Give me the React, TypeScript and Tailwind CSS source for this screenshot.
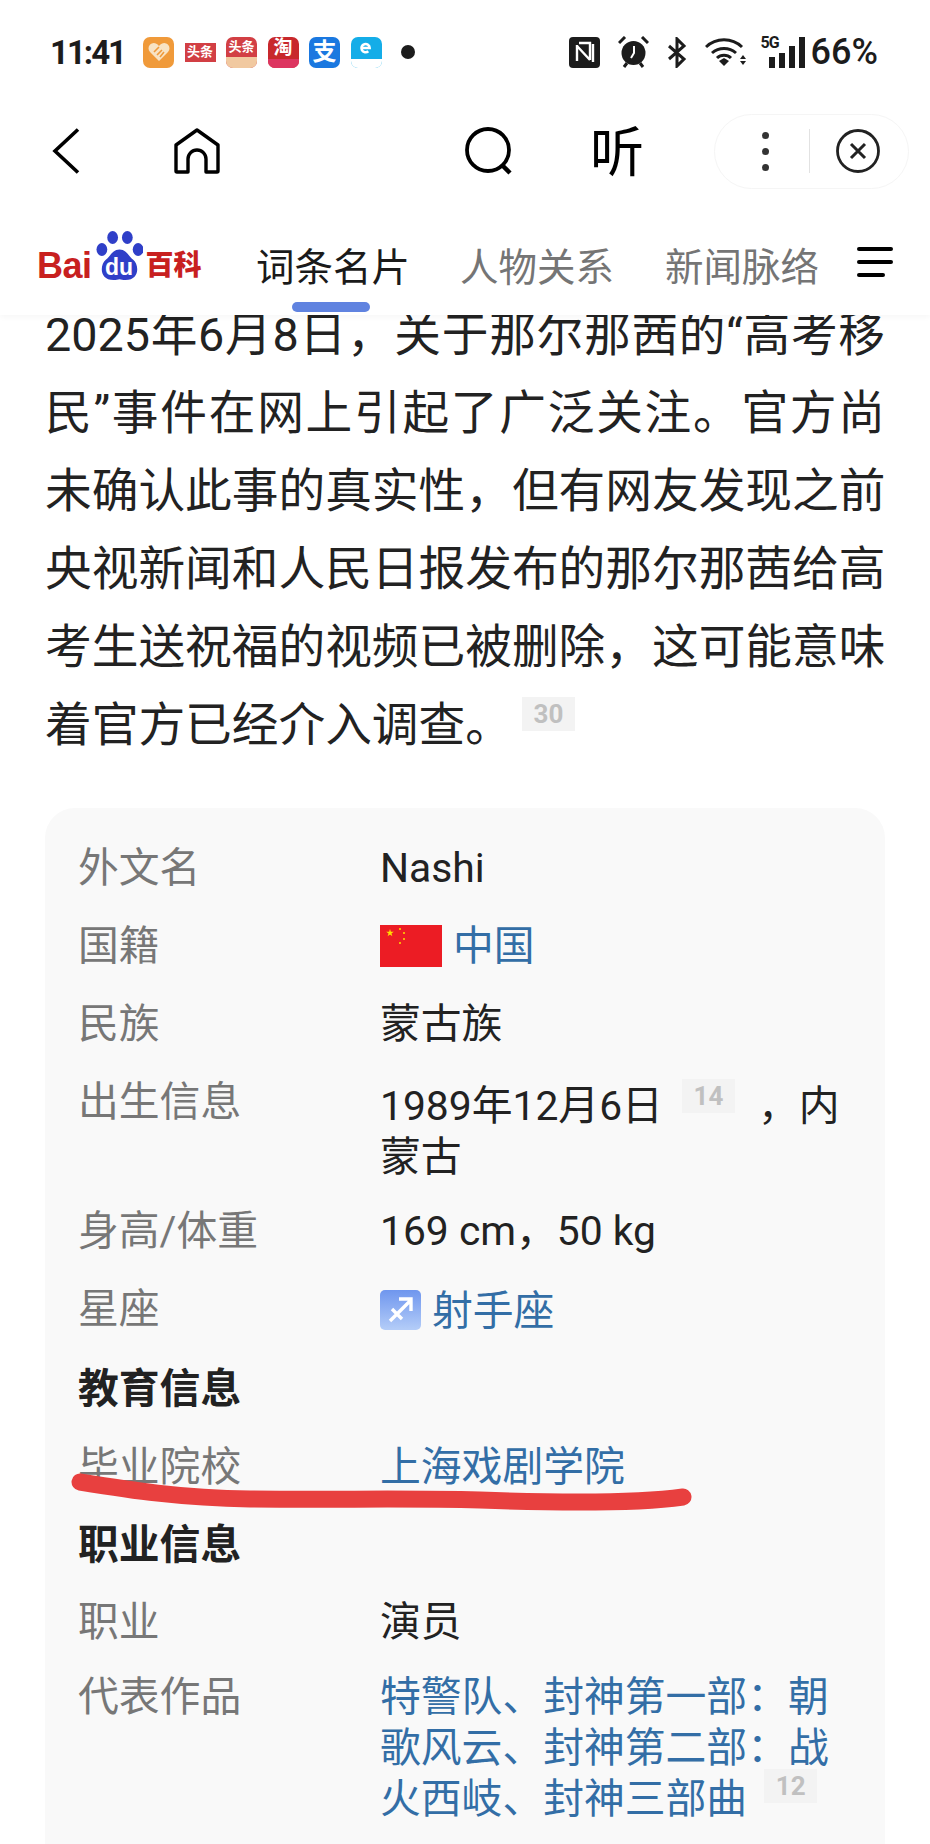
import type { ReactNode } from "react";

function AppIcon({ className, children }: { className: string; children?: ReactNode }) {
  return (
    <div className={`flex h-[31px] w-[31px] shrink-0 items-center justify-center overflow-hidden rounded-[7px] font-bold text-white ${className}`}>
      {children}
    </div>
  );
}

function StatusBar() {
  return (
    <div className="flex h-[103px] items-center pl-[50px] pr-[52px] pt-[1px] text-[#1c1c1c]">
      <span className="w-[93px] text-[33px] font-bold leading-none tracking-[-2px]">11:41</span>
      <div className="flex items-center gap-[10.5px]">
        <AppIcon className="bg-[#f09a3a]">
          <svg viewBox="0 0 24 24" className="h-[24px] w-[24px]">
            <path d="M12 21 3 12a5.3 5.3 0 0 1 7.6-7.4L12 6l1.4-1.4A5.3 5.3 0 0 1 21 12z" fill="#f8e3c4" />
            <path d="m7 12 5-5M10 15l5-5M13 17l4-5" stroke="#f09a3a" strokeWidth="1.6" />
          </svg>
        </AppIcon>
        <AppIcon className="!h-[19px] !rounded-none bg-[#d23f44] text-[13px]">头条</AppIcon>
        <AppIcon className="flex-col bg-[#d23f44] text-[13px] leading-[20px]">
          <span>头条</span>
          <span className="h-[11px] w-full bg-[#f1c9a0]" />
        </AppIcon>
        <AppIcon className="flex-col bg-[#c8282c] text-[19px] leading-[22px] text-[#f8d9a8]">
          <span>淘</span>
          <span className="h-[9px] w-full bg-[#dd3560]" />
        </AppIcon>
        <AppIcon className="bg-[#1a78e0] text-[24px]">支</AppIcon>
        <AppIcon className="flex-col !justify-start bg-[#14ade8]">
          <svg viewBox="0 0 24 24" className="h-[22px] w-[22px]" fill="none" stroke="white" strokeWidth="2.8">
            <path d="M8 12h8a4.5 4.5 0 1 0-1.5 3.5" />
          </svg>
          <span className="h-[9px] w-full bg-white" />
        </AppIcon>
      </div>
      <span className="ml-[19px] h-[14px] w-[14px] rounded-full bg-[#1c1c1c]" />
      <div className="ml-auto flex items-center">
        <svg viewBox="0 0 31 31" className="h-[31px] w-[31px]">
          <rect width="31" height="31" rx="4" fill="#1c1c1c" />
          <path d="M8 8v16M8 9l13 14M10 6h11v17M24 7v18" stroke="white" strokeWidth="2.4" fill="none" />
        </svg>
        <svg viewBox="0 0 31 32" className="ml-[18px] h-[32px] w-[31px]">
          <circle cx="15.5" cy="17" r="12" fill="#1c1c1c" />
          <path d="M1 7 7 1M30 7l-6-6" stroke="#1c1c1c" strokeWidth="3" />
          <path d="M6 31l3-4M25 31l-3-4" stroke="#1c1c1c" strokeWidth="3" />
          <path d="M16 10v7l-3 5" stroke="white" strokeWidth="2" fill="none" />
        </svg>
        <svg viewBox="0 0 20 31" className="ml-[18px] h-[31px] w-[20px]" fill="none" stroke="#1c1c1c" strokeWidth="3">
          <path d="M2 9l15 13-7 7V2l7 7L2 22" />
        </svg>
        <svg viewBox="0 0 44 31" className="ml-[18px] h-[31px] w-[44px]" fill="none" stroke="#1c1c1c" strokeWidth="3">
          <path d="M1 10a26 26 0 0 1 36 0M7 16a18 18 0 0 1 24 0M12 21a10 10 0 0 1 14 0" />
          <path d="m14 24 5-3 5 3-5 5z" fill="#1c1c1c" stroke="none" />
          <path d="m38 18 3 4h-6zM35 24h6l-3 4z" fill="#1c1c1c" stroke="none" />
        </svg>
        <div className="relative ml-[12px] h-[31px] w-[44px]">
          <span className="absolute left-0 top-[-2px] text-[16px] font-bold leading-[16px] tracking-[-1px]">5G</span>
          <div className="absolute bottom-0 right-0 flex items-end gap-[4px]">
            <span className="h-[11px] w-[6px] bg-[#1c1c1c]" />
            <span className="h-[15px] w-[6px] bg-[#1c1c1c]" />
            <span className="h-[22px] w-[6px] bg-[#1c1c1c]" />
            <span className="h-[31px] w-[6px] bg-[#1c1c1c]" />
          </div>
        </div>
        <span className="ml-[6px] text-[36px] font-medium leading-none">66%</span>
      </div>
    </div>
  );
}

function NavBar() {
  return (
    <div className="flex h-[96px] items-center pl-[52px] text-black">
      <svg viewBox="0 0 28 46" className="h-[46px] w-[28px]" fill="none" stroke="black" strokeWidth="3.6">
        <path d="M26 1.5 3 23l23 21.5" />
      </svg>
      <svg viewBox="0 0 46 46" className="ml-[94px] h-[46px] w-[46px]" fill="none" stroke="black" strokeWidth="3.4" strokeLinejoin="round">
        <path d="M2 17 23 2l21 15v26a1 1 0 0 1-1 1H32V31a9 9 0 0 0-18 0v13H3a1 1 0 0 1-1-1z" />
      </svg>
      <svg viewBox="0 0 48 48" className="ml-[245px] h-[48px] w-[48px]" fill="none" stroke="black" strokeWidth="3.8">
        <circle cx="23" cy="23" r="21" />
        <path d="m38 39 7 7" strokeWidth="4.5" />
      </svg>
      <span className="ml-[77px] mt-[5px] text-[54px] leading-none">听</span>
      <div className="ml-[70px] flex h-[75px] w-[195px] items-center rounded-full border border-[#f5f5f5]">
        <div className="ml-[47px] flex flex-col gap-[9px]">
          <span className="h-[7px] w-[7px] rounded-full bg-[#333]" />
          <span className="h-[7px] w-[7px] rounded-full bg-[#333]" />
          <span className="h-[7px] w-[7px] rounded-full bg-[#333]" />
        </div>
        <span className="ml-[40px] h-[44px] w-px bg-[#e2e2e2]" />
        <svg viewBox="0 0 44 44" className="ml-[26px] h-[44px] w-[44px]" fill="none" stroke="#222" strokeWidth="2.8">
          <circle cx="22" cy="22" r="20.5" />
          <path d="m15 15 14 14M29 15 15 29" strokeWidth="3" />
        </svg>
      </div>
    </div>
  );
}

function BaiduLogo() {
  return (
    <div className="mt-[-12px] flex h-[50px] w-[166px] items-end text-[#c8201f]">
      <span className="text-[36px] font-black leading-[30px] tracking-[-0.5px] [font-family:'Liberation_Sans',sans-serif]">Bai</span>
      <div className="relative ml-[4px] mr-[3px] h-[50px] w-[47px] shrink-0">
        <svg viewBox="0 0 48 54" preserveAspectRatio="none" className="h-full w-full" fill="#2f3fc8">
          <ellipse cx="17" cy="7" rx="5.5" ry="7" />
          <ellipse cx="32" cy="7" rx="5.5" ry="7" />
          <ellipse cx="6" cy="20" rx="5.5" ry="7" />
          <ellipse cx="43" cy="20" rx="5.5" ry="7" />
          <path d="M24 20c7 0 9 7 14 11 6 5 7 22-8 22-3 0-4-1-6-1s-3 1-6 1C3 53 4 36 10 31c5-4 7-11 14-11z" />
        </svg>
        <span className="absolute bottom-[2px] left-0 w-full text-center text-[23px] font-bold leading-[24px] text-white [font-family:'Liberation_Sans',sans-serif]">du</span>
      </div>
      <span className="text-[28px] font-black leading-[30px]">百科</span>
    </div>
  );
}

function TabBar() {
  return (
    <div className="relative flex h-[116px] items-start pl-[37px] pt-[44px]">
      <BaiduLogo />
      <div className="relative ml-[53px] mt-[1px] text-[38.5px] leading-[48px] text-[#1a1a1a]">
        词条名片
        <span className="absolute left-[36px] top-[58px] h-[10px] w-[78px] rounded-full bg-[#6083e0]" />
      </div>
      <span className="ml-[50px] mt-[1px] text-[38.5px] leading-[48px] text-[#757575]">人物关系</span>
      <span className="ml-[51px] mt-[1px] text-[38.5px] leading-[48px] text-[#757575]">新闻脉络</span>
      <div className="ml-[38px] mt-[4px] flex flex-col gap-[9px]">
        <span className="h-[4px] w-[36px] rounded-full bg-black" />
        <span className="h-[4px] w-[36px] rounded-full bg-black" />
        <span className="h-[4px] w-[28px] rounded-full bg-black" />
      </div>
    </div>
  );
}

function Cite({ n, className }: { n: number; className: string }) {
  return (
    <span className={`inline-block h-[34px] w-[53px] bg-[#f3f3f3] text-center align-top text-[26px] font-bold leading-[34px] text-[#c0c0c0] ${className}`}>
      {n}
    </span>
  );
}

function Row({ label, children, bold, className = "" }: { label: string; children?: ReactNode; bold?: boolean; className?: string }) {
  return (
    <div className={`flex px-[33px] py-[13.5px] leading-[51px] ${className}`}>
      <div className={`w-[302px] shrink-0 ${bold ? "font-bold text-[#222]" : "text-[#777]"}`}>{label}</div>
      <div className="whitespace-nowrap text-[#222]">{children}</div>
    </div>
  );
}

const lines = [
  "2025年6月8日，关于那尔那茜的“高考移",
  "民”事件在网上引起了广泛关注。官方尚",
  "未确认此事的真实性，但有网友发现之前",
  "央视新闻和人民日报发布的那尔那茜给高",
  "考生送祝福的视频已被删除，这可能意味",
];

export default function App() {
  return (
    <div className="relative h-[1844px] w-[930px] overflow-hidden bg-white [font-family:Roboto,'Noto_Sans_CJK_SC',sans-serif]">
      <header className="relative z-10 bg-white shadow-[0_2px_6px_rgba(0,0,0,0.04)]">
        <StatusBar />
        <NavBar />
        <TabBar />
      </header>

      <div className="mt-[-19px] px-[45px] text-[46.7px] leading-[78px] text-[#222]">
        {lines.map((line) => (
          <div key={line} className="whitespace-nowrap text-justify [text-align-last:justify] [text-justify:inter-character]">
            {line}
          </div>
        ))}
        <div className="whitespace-nowrap">
          着官方已经介入调查。
          <Cite n={30} className="ml-[10px] mt-[11px]" />
        </div>
      </div>

      <div className="mx-[45px] mt-[44px] rounded-[30px] bg-[#f9f9f9] pb-[60px] pt-[21px] text-[40.8px]">
        <Row label="外文名">Nashi</Row>
        <Row label="国籍">
          <span className="flex items-center">
            <svg viewBox="0 0 62 42" className="h-[42px] w-[62px]">
              <rect width="62" height="42" fill="#ec1c24" />
              <path d="m10 4 2.4 7.3-6.2-4.5h7.6l-6.2 4.5z" fill="#ffde00" />
              <circle cx="20" cy="4" r="1" fill="#ffde00" />
              <circle cx="24" cy="8" r="1" fill="#ffde00" />
              <circle cx="24" cy="14" r="1" fill="#ffde00" />
              <circle cx="20" cy="18" r="1" fill="#ffde00" />
            </svg>
            <span className="ml-[11px] text-[#336ea6]">中国</span>
          </span>
        </Row>
        <Row label="民族">蒙古族</Row>
        <Row label="出生信息">
          <div className="mb-[-4px] mt-[4px]">
            1989年12月6日
            <Cite n={14} className="ml-[19px] mt-[-2px]" />
            <span className="ml-[23px]">，内</span>
            <br />
            蒙古
          </div>
        </Row>
        <Row label="身高/体重">169 cm，50 kg</Row>
        <Row label="星座">
          <span className="flex items-center">
            <svg viewBox="0 0 41 40" className="h-[40px] w-[41px]">
              <defs>
                <linearGradient id="sag" x1="0" y1="0" x2="0" y2="1">
                  <stop offset="0" stopColor="#6f96ee" />
                  <stop offset="1" stopColor="#b4cdf8" />
                </linearGradient>
              </defs>
              <rect width="41" height="40" rx="5" fill="url(#sag)" />
              <path d="M10 31 31 10M19 9h12v12M12 19l10 10" stroke="white" strokeWidth="3.4" fill="none" />
            </svg>
            <span className="ml-[11px] mt-[2px] text-[#336ea6]">射手座</span>
          </span>
        </Row>
        <Row label="教育信息" bold />
        <Row label="毕业院校">
          <span className="text-[#336ea6]">上海戏剧学院</span>
        </Row>
        <Row label="职业信息" bold />
        <Row label="职业" className="mt-[-1px]">演员</Row>
        <Row label="代表作品" className="mt-[-3px]">
          <span className="text-[#336ea6]">特警队、封神第一部：朝</span>
          <br />
          <span className="text-[#336ea6]">歌风云、封神第二部：战</span>
          <br />
          <span className="text-[#336ea6]">火西岐、封神三部曲</span>
          <Cite n={12} className="ml-[17px] mt-[-5px]" />
        </Row>
      </div>

      {/* red marker stroke drawn over the screenshot */}
      <svg viewBox="0 0 930 1844" className="absolute left-0 top-0 z-20 h-[1844px] w-[930px]" fill="none">
        <path
          d="M80 1482C130 1490 180 1498 250 1499C340 1500 400 1498 480 1500C560 1503 640 1503 683 1497"
          stroke="#e8403f"
          strokeWidth="17"
          strokeLinecap="round"
        />
      </svg>
    </div>
  );
}
